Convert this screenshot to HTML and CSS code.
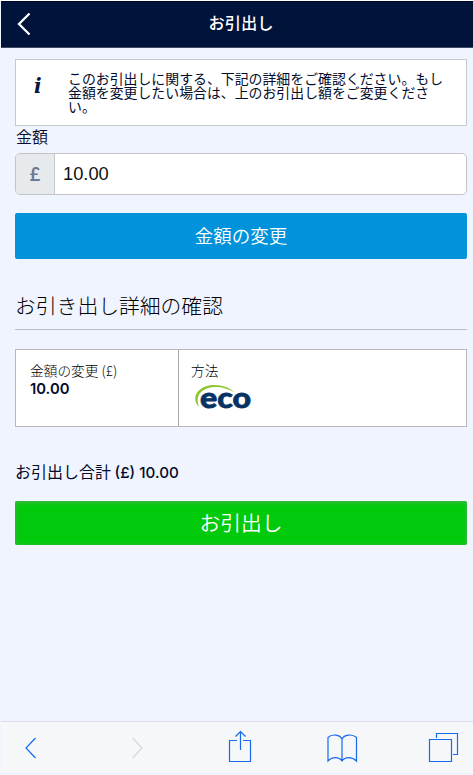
FILE: index.html
```html
<!DOCTYPE html>
<html lang="ja">

<head>
  <meta charset="UTF-8">
  <meta name="viewport" content="width=device-width, initial-scale=1.0">
  <title>お引出し</title>
  <link rel="stylesheet" href="styles.css">
</head>

<body>
  <header class="header">
    <a href="#" class="back" aria-label="戻る">
      <svg width="14" height="24" viewBox="0 0 14 24">
        <path d="M12.5 1.5 L2 12 L12.5 22.5" />
      </svg>
    </a>
    <h1>お引出し</h1>
  </header>

  <main class="content">
    <div class="info">
      <span class="info-icon">i</span>
      <p>このお引出しに関する、下記の詳細をご確認ください。もし金額を変更したい場合は、上のお引出し額をご変更ください。</p>
    </div>

    <label for="amount">金額</label>
    <div class="amount">
      <span class="currency">£</span>
      <input type="text" id="amount" value="10.00">
    </div>
    <button class="btn btn-change">金額の変更</button>

    <h2>お引き出し詳細の確認</h2>
    <div class="details">
      <div class="cell cell-amount">
        <p>金額の変更 (£)</p>
        <strong>10.00</strong>
      </div>
      <div class="cell">
        <p>方法</p>
        <svg class="eco" width="64" height="36" viewBox="0 0 64 36">
          <path d="M8 23 C-1 14 7 1 23 1 C32 1 39 4 43 8 C35 4 30 2.500 23 3 C9 4 4 13 8 23 Z" />
          <text x="9" y="24" textLength="51" lengthAdjust="spacingAndGlyphs">eco</text>
        </svg>
      </div>
    </div>

    <p class="total">お引出し合計 <span>(£) 10.00</span></p>
    <button class="btn btn-withdraw">お引出し</button>
  </main>

  <nav class="toolbar">
    <svg width="473" height="50" viewBox="0 0 473 50">
      <path d="M35.500 16 L26 26 L35.500 36" />
      <path class="disabled" d="M132.500 16 L142 26 L132.500 36" />
      <!-- share -->
      <path d="M237 18.500 H229.500 V39.500 H250.500 V18.500 H243 M240.500 28 V10 M235.500 14.500 L240.500 9.500 L245.500 14.500" />
      <!-- bookmarks -->
      <path d="M342 17 C340 12.500 332 11.500 328 15.500 V39 C332 34.500 339 34.500 342 39 C345 34.500 352 34.500 356.500 39 V15.500 C352 11.500 344 12.500 342 17 V39" />
      <!-- tabs -->
      <path d="M429.500 17.500 H451.500 V39.500 H429.500 Z M436.500 16 V11.500 H457.500 V32.500 H453" />
    </svg>
  </nav>
</body>

</html>
```
FILE: styles.css
```css
* {
  margin: 0;
  padding: 0;
  box-sizing: border-box;
}

body {
  display: flex;
  flex-direction: column;
  height: 775px;
  padding: 1px 0 2px 1px;
  overflow: hidden;
  background-color: #f0f4ff;
  box-shadow: inset 0 1px #fff;
  color: #020b2c;
  font-family: "Noto Sans CJK JP", sans-serif;
}

.header {
  display: grid;
  grid-template-columns: 60px 1fr 60px;
  align-items: center;
  height: 47px;
  background-color: #00133b;
  border-top: 1px solid #000620;
  border-bottom: 1px solid #3f4961;
  color: #fff;
}

.header h1 {
  font-size: 16.3px;
  font-weight: 500;
  line-height: 24px;
  text-align: center;
  padding: 0 0 5px 8px;
}

.back {
  height: 26px;
  padding-left: 16px;
}

.back svg {
  display: block;
  fill: none;
  stroke: #fff;
  stroke-width: 2.3;
}

.content {
  flex: 1;
  padding: 11px 6px 0 14px;
}

.info {
  display: flex;
  height: 67px;
  padding: 11px 18px 0 18px;
  background-color: #fff;
  border: 1px solid #c5c9ca;
}

.info-icon {
  width: 34px;
  font: italic bold 20px/30px "DejaVu Serif", serif;
  color: #04153e;
}

.info p {
  flex: 1;
  font-size: 13.9px;
  line-height: 14px;
}

label {
  display: block;
  height: 27px;
  padding-left: 1px;
  font-size: 16px;
  line-height: 20px;
  font-weight: 350;
}

.amount {
  display: flex;
  height: 42px;
  overflow: hidden;
  border: 1px solid #c2c4c5;
  border-radius: 5px;
  background-color: #fff;
}

.currency {
  width: 39px;
  border-right: 1px solid #c7c9ca;
  background-color: #e7eaed;
  color: #6d7893;
  font: bold 18px/41px Lato, sans-serif;
  text-align: center;
}

.amount input {
  flex: 1;
  min-width: 0;
  padding-left: 8px;
  border: none;
  outline: none;
  background: none;
  color: #111;
  font: 18.3px "Liberation Sans", sans-serif;
}

.btn {
  display: block;
  width: 100%;
  border: none;
  border-radius: 2px;
  color: #fff;
  font-family: inherit;
  text-align: center;
}

.btn-change {
  height: 46px;
  margin-top: 18px;
  padding-bottom: 2px;
  background-color: #0092da;
  font-size: 18.5px;
  line-height: 44px;
  font-weight: 350;
}

h2 {
  height: 45px;
  margin-top: 26px;
  border-bottom: 1px solid #bbbec3;
  font-size: 20.8px;
  font-weight: 300;
  line-height: 41px;
  color: #000;
}

.details {
  display: flex;
  height: 78px;
  margin-top: 19px;
  border: 1px solid #b7b9b8;
  background-color: #fff;
}

.cell {
  padding: 11px 12px 0;
}

.cell-amount {
  width: 163px;
  padding-left: 14px;
  border-right: 1px solid #aaa;
}

.cell p {
  font-size: 13.7px;
  font-weight: 300;
  line-height: 18px;
  color: #000;
}

.cell strong {
  display: block;
  margin-top: 1px;
  font: 600 14.8px/18px Inter, sans-serif;
}

.eco {
  display: block;
  margin-top: 5px;
}

.eco path {
  fill: #89c72d;
}

.eco text {
  fill: #093264;
  stroke: #093264;
  stroke-width: .8px;
  font: 900 29px Lato, sans-serif;
}

.total {
  margin-top: 32px;
  font-size: 16px;
  line-height: 24px;
}

.total span {
  font: 500 15.2px Inter, sans-serif;
}

.btn-withdraw {
  height: 44px;
  margin-top: 18px;
  padding-bottom: 2px;
  background-color: #00ca0b;
  box-shadow: inset 0 1px 5px #51ad59;
  font-size: 20.8px;
  font-weight: 350;
  line-height: 42px;
}

.toolbar {
  height: 52px;
  border-top: 1px solid #d9dee7;
  background-color: #f5f7f9;
}

.toolbar svg {
  display: block;
  margin-left: -1px;
  fill: none;
  stroke: #1769ee;
  stroke-width: 1.2;
}

.toolbar .disabled {
  stroke: #d5d7da;
}
```
